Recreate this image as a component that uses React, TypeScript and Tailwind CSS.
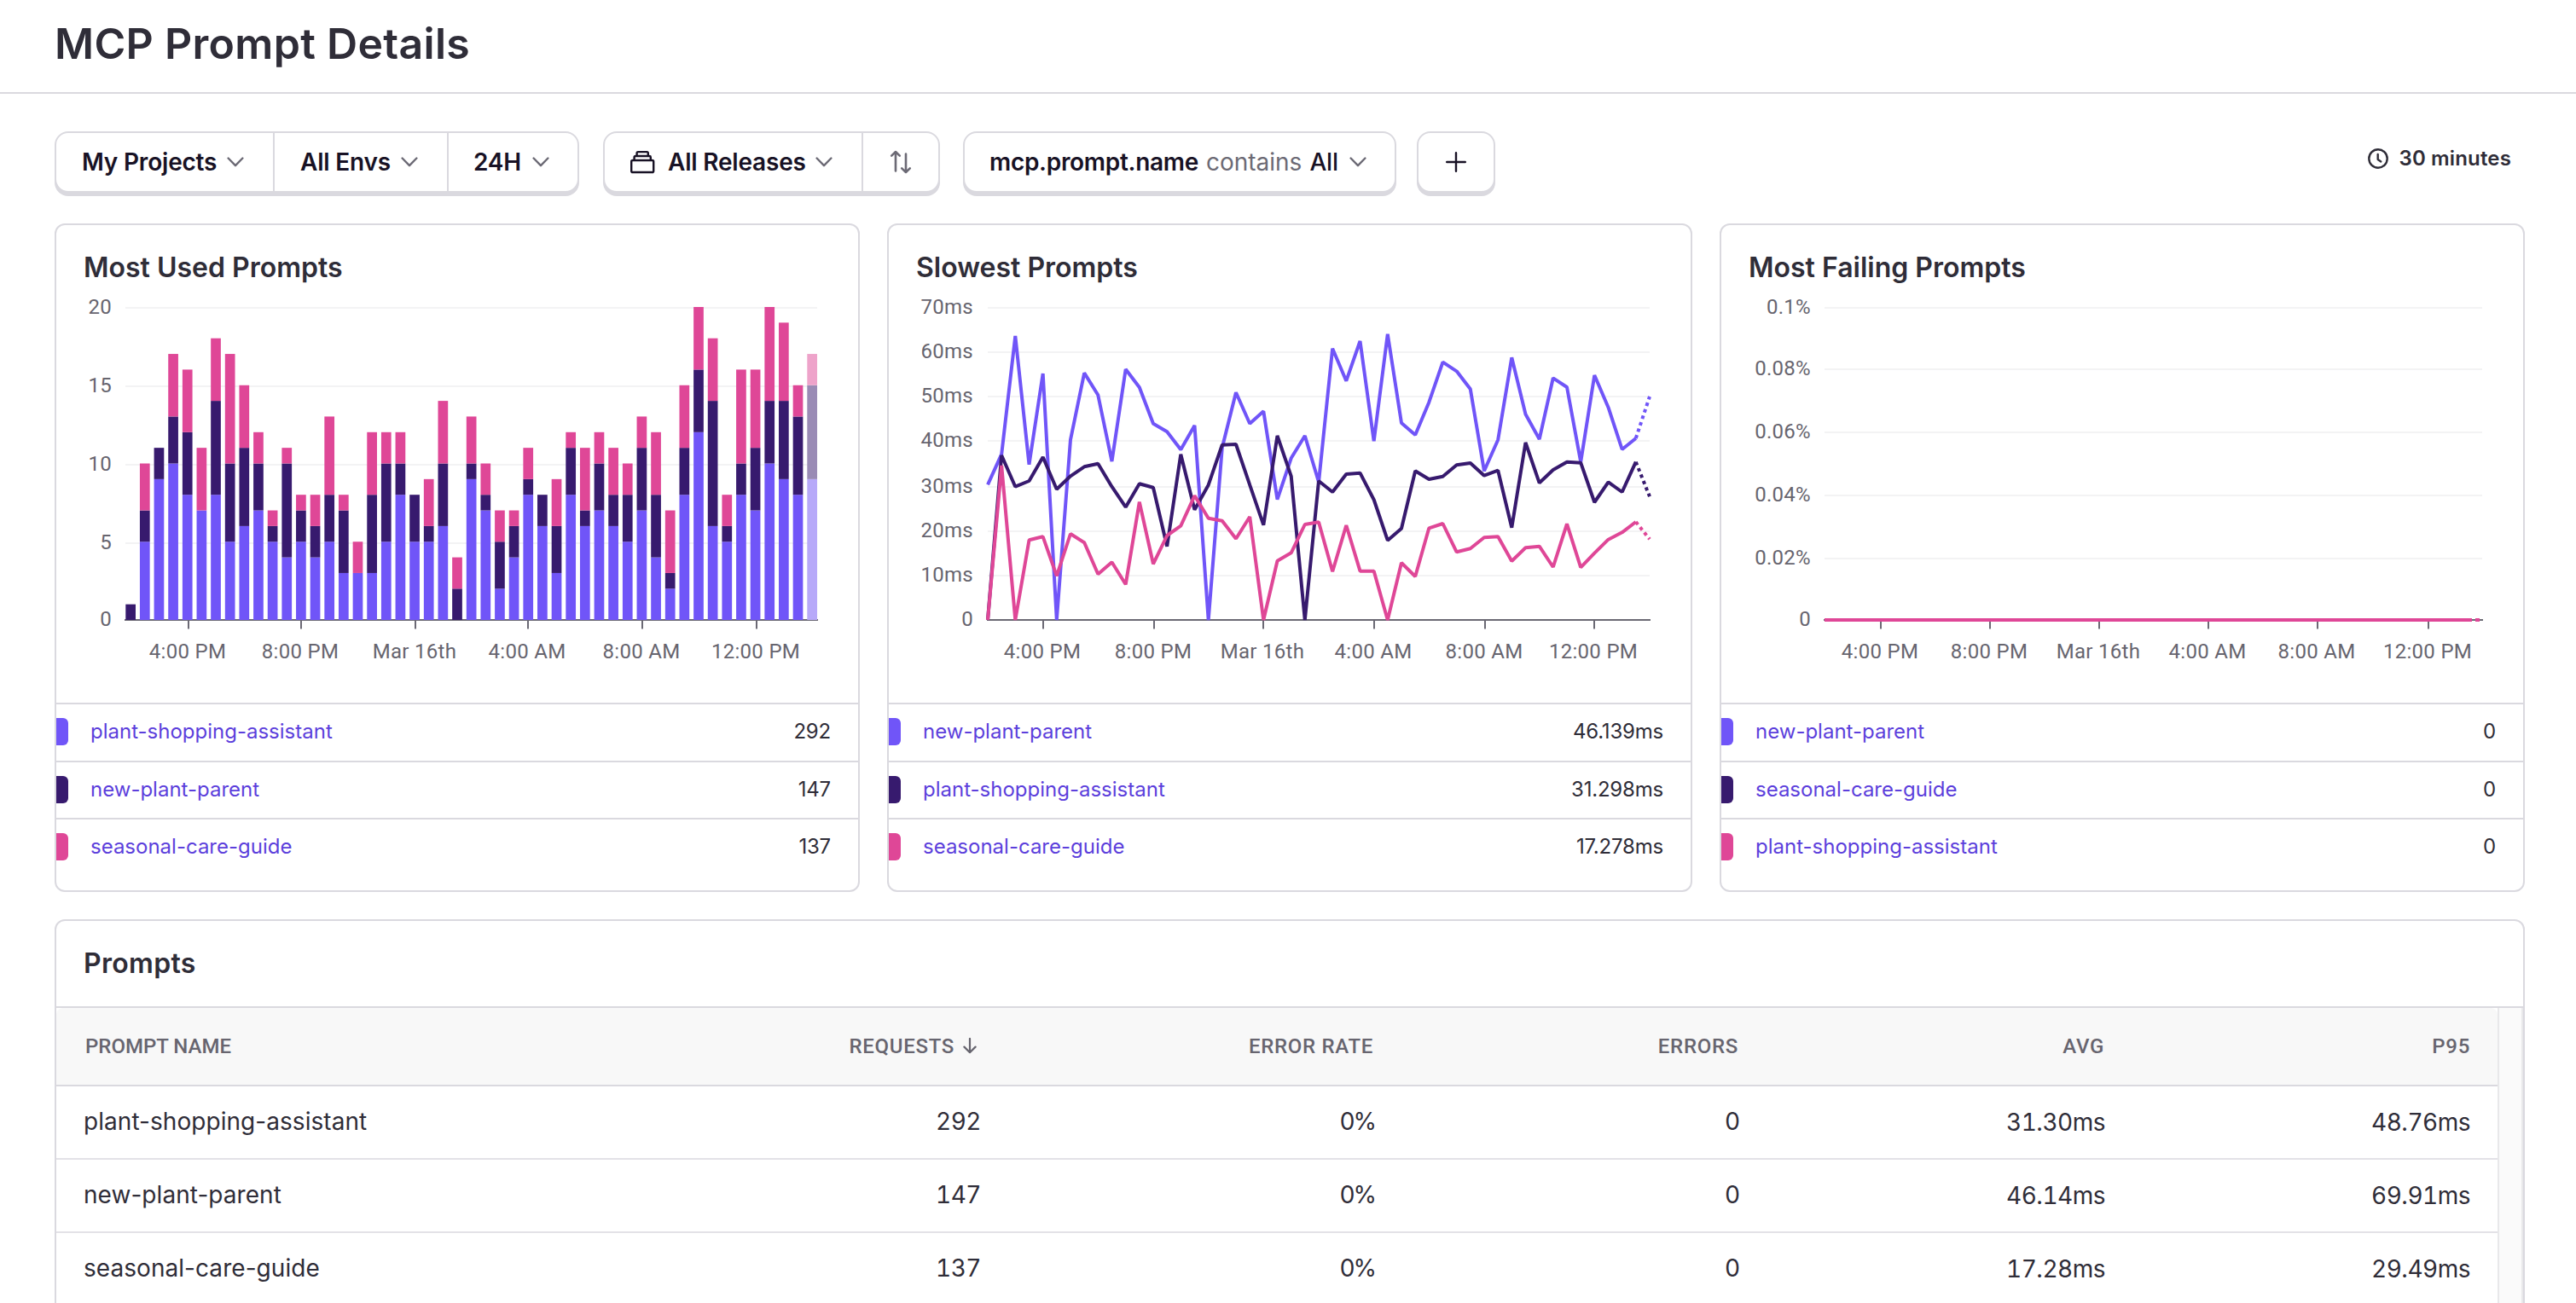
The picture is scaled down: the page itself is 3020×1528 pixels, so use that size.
import type { ReactNode } from 'react';
import clsx from 'clsx';

const PURPLE = '#7055f8';
const INDIGO = '#371a6e';
const PINK   = '#df4797';

const TIMES = ['4:00 PM', '8:00 PM', 'Mar 16th', '4:00 AM', '8:00 AM', '12:00 PM'];

// Cumulative stack tops per half hour: [plant-shopping-assistant, new-plant-parent, seasonal-care-guide]
const USAGE = [
  [0, 1, 1], [5, 7, 10], [9, 11, 11], [10, 13, 17], [8, 12, 16], [7, 7, 11], [8, 14, 18],
  [5, 10, 17], [6, 11, 15], [7, 10, 12], [5, 6, 7], [4, 10, 11], [5, 7, 8], [4, 6, 8],
  [5, 8, 13], [3, 7, 8], [3, 3, 5], [3, 8, 12], [5, 10, 12], [8, 10, 12], [5, 8, 8],
  [5, 6, 9], [6, 10, 14], [0, 2, 4], [9, 10, 13], [7, 8, 10], [2, 5, 7], [4, 6, 7],
  [8, 9, 11], [6, 8, 8], [3, 6, 9], [8, 11, 12], [6, 7, 11], [7, 10, 12], [6, 8, 11],
  [5, 8, 10], [7, 11, 13], [4, 8, 12], [2, 3, 7], [8, 11, 15], [12, 16, 20], [6, 14, 18],
  [5, 6, 8], [8, 10, 16], [7, 11, 16], [10, 14, 20], [9, 14, 19], [8, 13, 15], [9, 15, 17],
];

// Latency samples in chart units: 1161 is 0ms, 62 is 70ms
const LATENCY = [
  {
    color: PURPLE,
    points: [
      685, 578, 162, 614, 294, 1161, 527, 292, 370, 603, 279, 343, 470, 499, 562, 477, 1161, 555, 361, 470, 427, 737, 592, 513, 676,
      206, 320, 180, 532, 155, 468, 510, 395, 254, 286, 349, 637, 527, 238, 437, 525, 310, 342, 605, 300, 413, 561, 522, 375,
    ],
  },
  {
    color: INDIGO,
    points: [
      1161, 582, 692, 672, 588, 701, 655, 622, 611, 692, 764, 682, 695, 902, 578, 773, 686, 545, 543, 686, 827, 513, 655, 1161, 672,
      711, 648, 644, 738, 881, 839, 637, 666, 656, 616, 609, 653, 635, 836, 537, 679, 633, 605, 608, 747, 676, 711, 605, 727,
    ],
  },
  {
    color: PINK,
    points: [
      1161, 618, 1161, 880, 868, 1006, 858, 889, 1000, 958, 1036, 746, 964, 864, 830, 724, 803, 812, 875, 798, 1161, 953, 925, 825, 817,
      991, 828, 989, 989, 1161, 960, 1008, 838, 822, 922, 910, 871, 868, 954, 907, 902, 975, 823, 976, 926, 878, 853, 816, 877,
    ],
  },
];

const PROMPTS = [
  { name: 'plant-shopping-assistant', requests: 292, avg: '31.30ms', p95: '48.76ms' },
  { name: 'new-plant-parent',         requests: 147, avg: '46.14ms', p95: '69.91ms' },
  { name: 'seasonal-care-guide',      requests: 137, avg: '17.28ms', p95: '29.49ms' },
];

function Chevron({ className = 'ml-[12px]' }: { className?: string }) {
  return (
    <svg viewBox="0 0 20 12" className={clsx('h-3 w-5 shrink-0', className)} fill="none" stroke="#6c6a75" strokeWidth="2.4" strokeLinecap="round" strokeLinejoin="round">
      <path d="M1.6 1.5 10 10.2l8.4-8.7" />
    </svg>
  );
}

function FilterGroup({ className, children }: { className?: string; children: ReactNode }) {
  return (
    <div className={clsx('flex h-[72px] rounded-2xl border-2 border-[#dad9df] bg-white text-[28px] text-[#181225] shadow-[0_4px_0_#dad9df]', className)}>
      {children}
    </div>
  );
}

function FilterButton({ className, children }: { className?: string; children: ReactNode }) {
  return (
    <button className={clsx('flex items-center whitespace-nowrap border-[#dad9df] font-semibold tracking-[-0.2px]', className)}>{children}</button>
  );
}

type AxisProps = {
  left: number;
  labelRight: number;
  grid: [string, number][];
  ticks: number[];
  children: ReactNode;
};

function Chart({ left, labelRight, grid, ticks, children }: AxisProps) {
  return (
    <svg viewBox="0 0 940 484" className="block h-[484px] w-[940px] font-['Roboto',sans-serif] text-[24px] tracking-[0.3px]" fill="#67656f">
      {grid.map(([label, y]) => (
        <g key={label}>
          {y < 387 && <rect x={left} y={y - 1} width={892 - left} height={2} fill="#f3f3f4" />}
          <text x={labelRight} y={y + 7} textAnchor="end">{label}</text>
        </g>
      ))}
      <rect x={left - 1} y={386} width={894 - left} height={2} fill="#6b6974" />
      {ticks.map((x, i) => (
        <g key={x}>
          <rect x={x - 1} y={388} width={2} height={9.5} fill="#6b6974" />
          <text x={x - 1} y={432} textAnchor="middle">{TIMES[i]}</text>
        </g>
      ))}
      {children}
    </svg>
  );
}

function UsageChart() {
  const y = (v: number) => 387 - v * 18.35;
  return (
    <Chart left={81} labelRight={65} grid={[['20', 21], ['15', 113], ['10', 205], ['5', 297], ['0', 387]]} ticks={[155, 287, 421, 553, 687, 821]}>
      {USAGE.map(([a, b, c], i) => {
        const x = 81.3 + i * 16.646;
        const last = i === USAGE.length - 1;
        return (
          <g key={i}>
            {a > 0 && <rect x={x} y={y(a)} width={11.7} height={y(0) - y(a)} fill={last ? '#b7a9f9' : PURPLE} />}
            {b > a && <rect x={x} y={y(b)} width={11.7} height={y(a) - y(b)} fill={last ? '#9a8bb5' : INDIGO} />}
            {c > b && <rect x={x} y={y(c)} width={11.7} height={y(b) - y(c)} fill={last ? '#eea3ca' : PINK} />}
          </g>
        );
      })}
    </Chart>
  );
}

function LatencyChart() {
  const pt = (v: number, i: number) => `${(116 + i * 16.167).toFixed(1)},${(v / 3).toFixed(1)}`;
  return (
    <Chart
      left={116}
      labelRight={99}
      grid={[['70ms', 21], ['60ms', 73], ['50ms', 125], ['40ms', 177], ['30ms', 231], ['20ms', 283], ['10ms', 335], ['0', 387]]}
      ticks={[181, 311, 439, 569, 699, 827]}
    >
      {LATENCY.map(({ color, points }) => {
        const coords = points.map(pt);
        return (
          <g key={color} fill="none" stroke={color} strokeWidth="4" strokeLinejoin="bevel">
            <polyline points={coords.slice(0, -1).join(' ')} />
            <polyline points={coords.slice(-2).join(' ')} strokeDasharray="4 4" />
          </g>
        );
      })}
    </Chart>
  );
}

function FailureChart() {
  return (
    <Chart
      left={121}
      labelRight={105}
      grid={[['0.1%', 21], ['0.08%', 93], ['0.06%', 167], ['0.04%', 241], ['0.02%', 315], ['0', 387]]}
      ticks={[187, 315, 443, 571, 699, 829]}
    >
      <path d="M121 387H880" stroke={PINK} strokeWidth="4" />
      <path d="M884 387h5" stroke={PINK} strokeWidth="4" />
    </Chart>
  );
}

const LEGEND_ROWS = [
  { height: 'h-[68px]', color: 'bg-[#7055f8]' },
  { height: 'h-[67px]', color: 'bg-[#371a6e]' },
  { height: 'h-[68px]', color: 'bg-[#df4797]' },
];

function ChartCard({ title, rows, children }: { title: string; rows: [string, string][]; children: ReactNode }) {
  return (
    <section className="h-[784px] w-[944px] shrink-0 overflow-hidden rounded-xl border-2 border-[#dad9df] bg-white">
      <h2 className="flex h-[76px] items-center pl-8 pt-6 text-[32px] font-semibold">{title}</h2>
      {children}
      {rows.map(([name, value], i) => (
        <div key={name} className={clsx('flex items-center border-t-2 border-[#dad9df] pb-0.5 pr-8 text-[24px]', LEGEND_ROWS[i].height)}>
          <span className={clsx('h-8 w-3.5 rounded-r-md', LEGEND_ROWS[i].color)} />
          <a className="ml-[26px] flex-1 text-[#5c3fdc]">{name}</a>
          <span className="tracking-[-0.2px]">{value}</span>
        </div>
      ))}
    </section>
  );
}

const COLS = 'grid grid-cols-[688px_428px_462px_428px_428px_428px] items-center border-b-2';

export default function App() {
  return (
    <div className="h-[1528px] w-[3020px] overflow-hidden bg-white font-['Inter','Roboto',sans-serif] leading-none text-[#2f2d38]">
      <header className="flex h-[110px] items-center border-b-2 border-[#dad9df] pb-1.5 pl-16">
        <h1 className="text-[50px] font-semibold tracking-[0.3px]">MCP Prompt Details</h1>
      </header>

      <main className="pl-16 pr-[60px]">
        {/* Filters */}
        <div className="flex h-[152px] items-start pt-11">
          <FilterGroup className="w-[615px]">
            <FilterButton className="w-[256px] border-r-2 pl-[30px]">My Projects<Chevron /></FilterButton>
            <FilterButton className="w-[204px] border-r-2 pl-[30px]">All Envs<Chevron className="ml-[12px]" /></FilterButton>
            <FilterButton className="flex-1 pl-[29px]">24H<Chevron className="ml-[13px]" /></FilterButton>
          </FilterGroup>

          <FilterGroup className="ml-7 w-[395px]">
            <FilterButton className="w-[303px] border-r-2 pl-[29px]">
              <svg viewBox="0 0 30 28" className="h-7 w-[30px]" fill="none" stroke="#181225" strokeWidth="2.4" strokeLinejoin="round">
                <rect x="2.2" y="12" width="26" height="14" rx="1.6" />
                <path d="M5.6 11.5V8.6c0-1 .6-1.6 1.6-1.6h16c1 0 1.6.6 1.6 1.6v2.9" />
                <path d="M8.6 6.5V3.6c0-1 .5-1.5 1.4-1.5h10.4c.9 0 1.4.5 1.4 1.5v2.9" />
              </svg>
              <span className="ml-[15px]">All Releases</span>
              <Chevron className="ml-[11px]" />
            </FilterButton>
            <FilterButton className="flex-1 justify-center">
              <svg viewBox="0 0 26 28" className="h-7 w-[26px]" fill="none" stroke="#6c6a75" strokeWidth="2.6" strokeLinecap="round" strokeLinejoin="round">
                <path d="M7 24.5V2.2M2.2 6.6 7 2l4.8 4.6M19 4.5v21.3M14.2 21.4 19 26l4.8-4.6" />
              </svg>
            </FilterButton>
          </FilterGroup>

          <FilterGroup className="ml-[27px] w-[508px]">
            <FilterButton className="flex-1 pl-[29px]">
              <span className="tracking-[-0.3px]">mcp.prompt.name</span>
              <span className="ml-[9px] font-normal tracking-normal text-[#6c6a75]">contains</span>
              <span className="ml-[9px] font-medium">All</span>
              <Chevron className="ml-[13px]" />
            </FilterButton>
          </FilterGroup>

          <FilterGroup className="ml-6 w-[92px]">
            <FilterButton className="flex-1 justify-center">
              <svg viewBox="0 0 24 24" className="size-6" stroke="#181225" strokeWidth="2.4" strokeLinecap="round">
                <path d="M12 1.2v21.6M1.2 12h21.6" />
              </svg>
            </FilterButton>
          </FilterGroup>

          <div className="ml-auto flex items-center pr-4 pt-5 text-[24px] font-semibold">
            <svg viewBox="0 0 24 24" className="mr-3 size-6" fill="none" stroke="#2f2d38" strokeWidth="2.4" strokeLinecap="round" strokeLinejoin="round">
              <circle cx="12" cy="12" r="10.7" />
              <path d="M11.7 7v6l3.6 2.4" />
            </svg>
            <span className="tracking-[0.15px]">30 minutes</span>
          </div>
        </div>

        {/* Charts */}
        <div className="flex gap-8">
          <ChartCard title="Most Used Prompts" rows={[['plant-shopping-assistant', '292'], ['new-plant-parent', '147'], ['seasonal-care-guide', '137']]}>
            <UsageChart />
          </ChartCard>
          <ChartCard title="Slowest Prompts" rows={[['new-plant-parent', '46.139ms'], ['plant-shopping-assistant', '31.298ms'], ['seasonal-care-guide', '17.278ms']]}>
            <LatencyChart />
          </ChartCard>
          <ChartCard title="Most Failing Prompts" rows={[['new-plant-parent', '0'], ['seasonal-care-guide', '0'], ['plant-shopping-assistant', '0']]}>
            <FailureChart />
          </ChartCard>
        </div>

        {/* Prompts table */}
        <section className="mt-8 h-[520px] overflow-hidden rounded-xl border-2 border-[#dad9df]">
          <h2 className="flex h-[102px] items-center border-b-2 border-[#dad9df] pl-8 text-[32px] font-semibold tracking-[0.3px]">Prompts</h2>
          <div className="flex">
            <div className="w-[2862px] shrink-0">
              <div className={clsx(COLS, "h-[92px] rounded-t-lg border-[#dad9df] bg-[#f8f8f8] text-right font-['Roboto',sans-serif] text-[24px] font-medium tracking-[0.7px] text-[#67656f]")}>
                <span className="pl-[34px] text-left tracking-normal">PROMPT NAME</span>
                <span className="flex items-center justify-end pr-[37px]">
                  REQUESTS
                  <svg viewBox="0 0 16 20" className="ml-[10px] h-5 w-4" fill="none" stroke="#67656f" strokeWidth="2.2" strokeLinecap="round" strokeLinejoin="round">
                    <path d="M8 1v16M1.4 10.6 8 17.2l6.6-6.6" />
                  </svg>
                </span>
                <span className="pr-[34px]">ERROR RATE</span>
                <span className="pr-[34px]">ERRORS</span>
                <span className="pr-[33px]">AVG</span>
                <span className="pr-[32px]">P95</span>
              </div>
              {PROMPTS.map(p => (
                <div key={p.name} className={clsx(COLS, 'h-[86px] border-[#e3e2e7] text-right text-[28px]')}>
                  <span className="pb-0.5 pl-8 text-left tracking-[0.05px]">{p.name}</span>
                  <span className="pb-0.5 pr-8 tabular-nums tracking-[-0.5px]">{p.requests}</span>
                  <span className="pb-0.5 pr-8 tracking-[-2px]">0%</span>
                  <span className="pb-0.5 pr-8">0</span>
                  <span className="pr-8 tabular-nums tracking-[-0.5px]">{p.avg}</span>
                  <span className="pr-8 tabular-nums tracking-[-0.5px]">{p.p95}</span>
                </div>
              ))}
            </div>
            <div className="h-[420px] flex-1 border-x-2 border-[#e8e8ea] bg-[#fafafa]" />
          </div>
        </section>
      </main>
    </div>
  );
}
